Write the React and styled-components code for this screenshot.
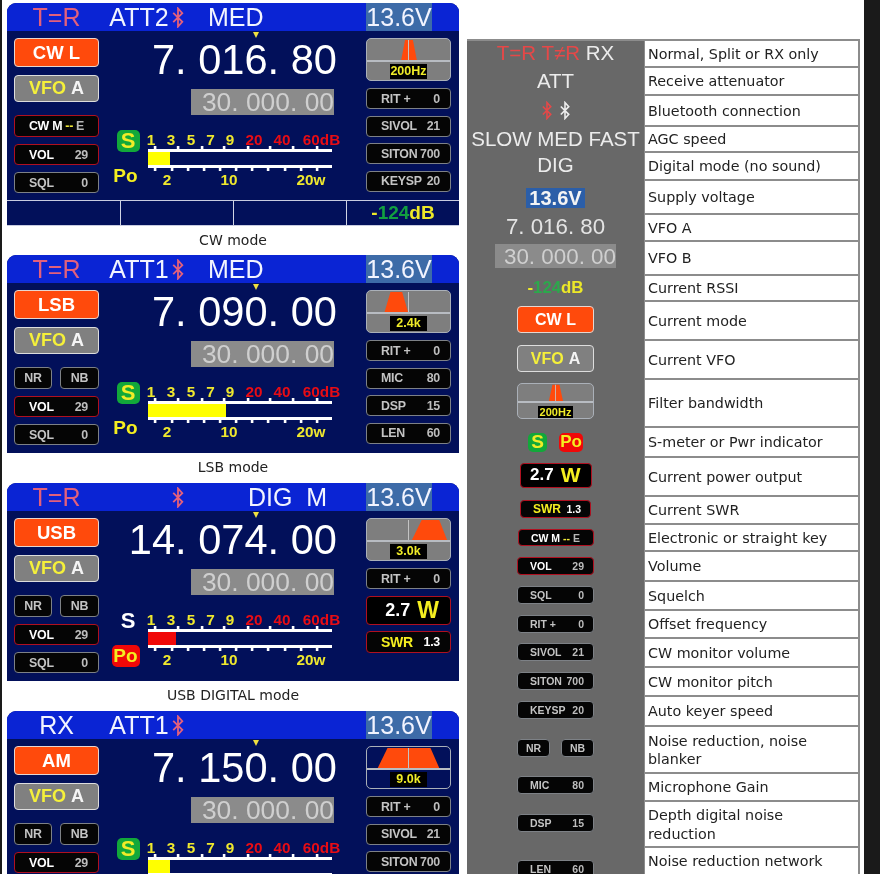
import React from "react";
import styled, { createGlobalStyle } from "styled-components";

const Global = createGlobalStyle`
  html, body { margin: 0; padding: 0; background: #1a1a1a; height: 874px; overflow: hidden; }
  #root { height: 874px; overflow: hidden; }
`;

const Sheet = styled.div`
  margin-left: 2px;
  width: 862px;
  height: 874px;
  overflow: hidden;
  background: #fff;
  display: flex;
  gap: 8px;
  padding-left: 5px;
  box-sizing: border-box;
  font-family: "Liberation Sans", Arial, sans-serif;
  filter: blur(0.35px);
`;
const LeftColumn = styled.div`
  width: 452px;
  flex: none;
  padding-top: 3px;
`;
const RightColumn = styled.div`
  width: 393px;
  flex: none;
  margin-top: 39px;
  border-top: 2px solid #8c8c8c;
  align-self: flex-start;
`;

/* ---------- radio panel ---------- */
const Panel = styled.section`
  position: relative;
  background: #02105a;
  border-radius: 9px 9px 0 0;
  overflow: hidden;
`;
const Header = styled.header`
  height: 28px;
  background: #0a24d4;
  display: flex;
  align-items: center;
  font-size: 25px;
  color: #f2f4ff;
`;
const LinkSlot = styled.span`
  width: 99px;
  text-align: center;
  flex: none;
  color: ${(p) => (p.$rx ? "#f2f4ff" : "#e2607c")};
`;
const AttSlot = styled.span`
  width: 66px;
  flex: none;
  text-align: center;
`;
const BtSlot = styled.span`
  width: 12px;
  flex: none;
  display: flex;
`;
const AgcSlot = styled.span`
  margin-left: ${(p) => p.$offset}px;
  white-space: pre;
`;
const Voltage = styled.span`
  margin-left: auto;
  margin-right: 27px;
  width: 66px;
  height: 28px;
  line-height: 29px;
  text-align: center;
  background: #3d6ba8;
`;
const Tuner = styled.i`
  position: absolute;
  left: 246px;
  top: 29px;
  width: 0;
  height: 0;
  border-left: 3.5px solid transparent;
  border-right: 3.5px solid transparent;
  border-top: 6px solid #f0e040;
`;
const Body = styled.div`
  display: grid;
  grid-template-columns: 85px 267px 85px;
  padding: 7px 8px 7px 7px;
  height: 156px;
`;
const Side = styled.div`
  display: flex;
  flex-direction: column;
`;
const Center = styled.div`
  display: flex;
  flex-direction: column;
  align-items: flex-end;
`;
const ModeButton = styled.div`
  box-sizing: border-box;
  height: ${(p) => (p.$small ? 27 : 29)}px;
  width: ${(p) => (p.$small ? 77 : 85)}px;
  border: 1.5px solid #e6d6d0;
  border-radius: 4px;
  background: #ff4a0c;
  color: #fff;
  font-weight: 700;
  font-size: ${(p) => (p.$small ? 16 : 18.5)}px;
  display: flex;
  align-items: center;
  justify-content: center;
`;
const VfoButton = styled.div`
  box-sizing: border-box;
  height: 27px;
  width: ${(p) => (p.$small ? 77 : 85)}px;
  margin-top: ${(p) => (p.$small ? 0 : 8)}px;
  border: 1.5px solid #ddd;
  border-radius: 4px;
  background: #808080;
  color: #f5f03a;
  font-weight: 700;
  font-size: ${(p) => (p.$small ? 16 : 18)}px;
  display: flex;
  align-items: center;
  justify-content: center;
  gap: 5px;
  & b { color: #f4f4f4; }
`;
const Controls = styled.div`
  display: flex;
  flex-direction: column;
  gap: ${(p) => p.$gap}px;
  margin-top: ${(p) => p.$top}px;
`;
const Readout = styled.div`
  box-sizing: border-box;
  height: ${(p) => p.$h}px;
  width: ${(p) => p.$w || 85}px;
  flex: none;
  white-space: nowrap;
  background: #050505;
  border: 1.5px solid ${(p) => (p.$tone === "red" ? "#b01020" : "#7d8186")};
  border-radius: 4px;
  color: ${(p) => (p.$tone === "red" ? "#fff" : "#c4c4c4")};
  font-weight: 700;
  letter-spacing: ${(p) => (p.$small ? 0 : -0.25)}px;
  font-size: ${(p) => (p.$small ? 10.5 : 12.4)}px;
  display: flex;
  align-items: center;
  justify-content: ${(p) => (p.$center ? "center" : "space-between")};
  padding: ${(p) => (p.$center ? "0" : p.$small ? "0 9px 0 12px" : "0 10px 0 14px")};
  & em { font-style: normal; color: #bdbdbd; }
`;
const KeyYellow = styled.span`
  color: #f0e838;
  margin: 0 3px;
`;
const KeyMuted = styled.span`
  color: #b8b8b8;
`;
const KeyRow = styled.div`
  display: flex;
  justify-content: space-between;
  width: ${(p) => p.$w}px;
`;
const PowerBox = styled(Readout)`
  background: #000;
  justify-content: flex-end;
  padding: 0 ${(p) => (p.$small ? 10 : 11)}px 0 0;
  color: #fff;
  letter-spacing: 0;
  font-size: ${(p) => (p.$small ? 17 : 18)}px;
  & b { color: #f4ee20; font-size: ${(p) => (p.$small ? 21 : 23)}px; margin-left: 7px; }
`;
const SwrBox = styled(Readout)`
  color: #fff;
  & b { color: #f4ee20; font-size: ${(p) => (p.$small ? 12 : 14)}px; }
`;

/* frequencies */
const FreqMain = styled.div`
  font-size: ${(p) => (p.$small ? 22.3 : 41.6)}px;
  line-height: ${(p) => (p.$small ? 26 : 42)}px;
  height: ${(p) => (p.$small ? 26 : 42)}px;
  color: ${(p) => (p.$small ? "#e4e4e4" : "#fff")};
  white-space: pre;
  margin: ${(p) => (p.$small ? 0 : "0.5px 29px 0 0")};
`;
const FreqSub = styled.div`
  box-sizing: border-box;
  background: #8b8b8b;
  color: #cfcfcf;
  text-align: right;
  white-space: pre;
  width: ${(p) => (p.$small ? 121 : 143)}px;
  height: ${(p) => (p.$small ? 24 : 26)}px;
  line-height: ${(p) => (p.$small ? 25 : 27)}px;
  font-size: ${(p) => (p.$small ? 22.4 : 26.4)}px;
  margin: ${(p) => (p.$small ? 0 : "8.5px 32px 0 0")};
`;

/* meter */
const MeterRow = styled.div`
  align-self: stretch;
  display: flex;
  margin-top: 15px;
  padding-left: 11px;
`;
const BadgeColumn = styled.div`
  width: 31px;
  flex: none;
  display: flex;
  flex-direction: column;
  gap: 13px;
  align-items: center;
`;
const Badge = styled.span`
  box-sizing: border-box;
  display: flex;
  align-items: center;
  justify-content: center;
  height: ${(p) => (p.$small ? 19 : 22)}px;
  border-radius: 5px;
  width: ${(p) => p.$w}px;
  margin-left: ${(p) => p.$shift || 0}px;
  background: ${(p) => p.$bg || "transparent"};
  color: ${(p) => p.$color};
  font-weight: 700;
  font-size: ${(p) => p.$size}px;
`;
const Meter = styled.div`
  flex: none;
  width: 207px;
  padding-top: 2px;
`;
const ScaleRow = styled.div`
  display: flex;
  font-weight: 700;
  font-size: 15.3px;
  line-height: ${(p) => p.$lh}px;
  height: ${(p) => p.$lh}px;
  margin-top: ${(p) => p.$top || 0}px;
`;
const ScaleLabel = styled.span`
  width: ${(p) => p.$w}px;
  flex: none;
  text-align: center;
  color: ${(p) => (p.$red ? "#e80c14" : "#efe82e")};
`;
const MeterSvg = styled.svg`
  display: block;
  width: 207px;
  height: 25px;
  margin-top: -1px;
`;

/* filter */
const Filter = styled.div`
  box-sizing: border-box;
  width: ${(p) => (p.$small ? 77 : 85)}px;
  height: ${(p) => (p.$small ? 36 : 43)}px;
  border: 1px solid #aab0b8;
  border-radius: 5px;
  background: ${(p) => (p.$navy ? "#02105a" : "#7e7e7e")};
  overflow: hidden;
  display: flex;
  flex-direction: column;
  align-items: center;
`;
const FilterSvg = styled.svg`
  display: block;
  width: 100%;
  height: ${(p) => (p.$small ? 17 : 21)}px;
  flex: none;
`;
const FilterLine = styled.div`
  width: 100%;
  height: 1.5px;
  flex: none;
  background: #b8bcc2;
`;
const FilterLabel = styled.span`
  margin-top: ${(p) => (p.$small ? 3 : 2.5)}px;
  width: ${(p) => (p.$small ? 35 : 37)}px;
  height: ${(p) => (p.$small ? 12 : 15)}px;
  line-height: ${(p) => (p.$small ? 12 : 15)}px;
  background: #000;
  color: #f0ec28;
  font-weight: 700;
  font-size: ${(p) => (p.$small ? 11 : 12.5)}px;
  text-align: center;
`;

/* footer */
const Footer = styled.footer`
  display: grid;
  grid-template-columns: repeat(4, 113px);
  height: 26px;
  box-sizing: border-box;
  border-top: 1.5px solid #c8cce0;
  border-bottom: 1.5px solid #c8cce0;
  margin-top: -1px;
`;
const FooterCell = styled.div`
  border-left: ${(p) => (p.$first ? "none" : "1.5px solid #d0d4e4")};
  display: flex;
  align-items: center;
  justify-content: center;
`;
const Rssi = styled.span`
  font-weight: 700;
  font-size: ${(p) => (p.$small ? 16.8 : 19)}px;
  color: #ece828;
  & i { font-style: normal; color: ${(p) => (p.$small ? "#2ca84c" : "#12a040")}; }
`;
const Caption = styled.div`
  height: ${(p) => p.$h}px;
  display: flex;
  align-items: center;
  justify-content: center;
  font-family: "DejaVu Sans", sans-serif;
  font-size: 14px;
  color: #222;
  padding-bottom: 2px;
  box-sizing: border-box;
`;

/* legend table */
const LegendRow = styled.div`
  display: grid;
  grid-template-columns: 177px 216px;
  grid-template-rows: ${(p) => p.$h}px;
`;
const Sample = styled.div`
  background: #686868;
  color: #ececec;
  display: flex;
  align-items: center;
  justify-content: center;
  font-size: 20.5px;
  line-height: 20px;
  gap: ${(p) => p.$gap || 0}px;
  white-space: nowrap;
  box-sizing: border-box;
  min-height: 0;
  padding-bottom: ${(p) => p.$lift || 0}px;
`;
const Meaning = styled.div`
  box-sizing: border-box;
  background: #fff;
  min-height: 0;
  border-left: 1px solid #8c8c8c;
  border-right: 2px solid #8c8c8c;
  border-bottom: 2px solid #8c8c8c;
  padding: ${(p) => (p.$top ? 4 : 1)}px 4px 0 3px;
  display: flex;
  align-items: ${(p) => (p.$top ? "flex-start" : "center")};
  font-family: "DejaVu Sans", sans-serif;
  font-size: 14.3px;
  line-height: 18.5px;
  color: #222;
`;
const Red = styled.span`
  color: #e54848;
`;
const SupplyTag = styled.span`
  background: #2b5ea8;
  color: #f4f4f4;
  font-weight: 700;
  width: 59px;
  height: 20px;
  line-height: 21px;
  text-align: center;
  font-size: 20px;
`;

const BtIcon = ({ color, w = 12, h = 21, sw = 1.9 }) => (
  <svg width={w} height={h} viewBox="0 0 12 22" fill="none" stroke={color} strokeWidth={sw}>
    <path d="M1 6.2 10.5 15.6 6 20.5V1.5l4.5 4.9L1 15.8" />
  </svg>
);

const topTicks = [14, 37, 61, 83, 107, 129, 152, 176];
const botTicks = [14, 31, 47, 63, 79, 95, 111, 127, 144, 160, 176];

const MeterBars = ({ fill, color }) => (
  <MeterSvg viewBox="0 0 207 25">
    {topTicks.map((x) => <rect key={x} x={x - 1.2} y="0" width="2.6" height="3" fill="#fff" />)}
    {botTicks.map((x) => <rect key={x} x={x - 1.2} y="22" width="2.6" height="3" fill="#fff" />)}
    <rect x="7" y="3" width="184" height="3" fill="#fff" />
    <rect x="7" y="19" width="184" height="3" fill="#fff" />
    <rect x="7" y="6" width={fill} height="13" fill={color} />
  </MeterSvg>
);

const FilterShape = ({ shape, small, navy, label }) => (
  <Filter $small={small} $navy={navy}>
    <FilterSvg $small={small} viewBox="0 0 85 21" preserveAspectRatio="none">
      <polygon points={shape} fill="#ff4a0c" />
      <line x1="42.5" y1="1" x2="42.5" y2="21" stroke="#c4c4c4" strokeWidth="1" />
    </FilterSvg>
    <FilterLine />
    <FilterLabel $small={small}>{label}</FilterLabel>
  </Filter>
);

const RedBox = (p) => <Readout $h={21} $tone="red" {...p} />;
const GrayBox = (p) => <Readout $h={21} $tone="gray" {...p} />;
const Pair = ({ a, b }) => (<><span>{a}</span><em>{b}</em></>);

const RadioPanel = ({ d }) => (
  <Panel>
    <Header>
      <LinkSlot $rx={d.link === "RX"}>{d.link}</LinkSlot>
      <AttSlot>{d.att}</AttSlot>
      <BtSlot><BtIcon color="#e2607c" /></BtSlot>
      <AgcSlot $offset={d.agc.length > 3 ? 64 : 24}>{d.agc}</AgcSlot>
      <Voltage>13.6V</Voltage>
    </Header>
    <Tuner />
    <Body>
      <Side>
        <ModeButton>{d.mode}</ModeButton>
        <VfoButton>VFO <b>A</b></VfoButton>
        <Controls $top={13} $gap={7}>
          {d.keys ? (
            <Readout $h={22} $tone="red" $center>
              CW M<KeyYellow>--</KeyYellow><KeyMuted>E</KeyMuted>
            </Readout>
          ) : (
            <KeyRow $w={85}>
              <Readout $h={22} $w={38} $tone="gray" $center>NR</Readout>
              <Readout $h={22} $w={39} $tone="gray" $center>NB</Readout>
            </KeyRow>
          )}
          <RedBox><Pair a="VOL" b="29" /></RedBox>
          <GrayBox><Pair a="SQL" b="0" /></GrayBox>
        </Controls>
      </Side>
      <Center>
        <FreqMain>{d.freq}</FreqMain>
        <FreqSub>30. 000. 00</FreqSub>
        <MeterRow>
          <BadgeColumn>
            {d.tx ? (
              <Badge $w={23} $shift={5} $color="#fff" $size={22}>S</Badge>
            ) : (
              <Badge $w={23} $shift={5} $bg="#12a83a" $color="#f0ec28" $size={22}>S</Badge>
            )}
            {d.tx ? (
              <Badge $w={28} $bg="#f00808" $color="#f4ee20" $size={19}>Po</Badge>
            ) : (
              <Badge $w={28} $color="#f4ee20" $size={19}>Po</Badge>
            )}
          </BadgeColumn>
          <Meter>
            <ScaleRow $lh={15}>
              {[["1", 20], ["3", 20], ["5", 20], ["7", 19], ["9", 20]].map(([t, w]) => (
                <ScaleLabel key={t} $w={w}>{t}</ScaleLabel>
              ))}
              {[["20", 28], ["40", 28], ["60dB", 51]].map(([t, w]) => (
                <ScaleLabel key={t} $w={w} $red>{t}</ScaleLabel>
              ))}
            </ScaleRow>
            <MeterBars fill={d.fill} color={d.tx ? "#f00808" : "#ffff00"} />
            <ScaleRow $lh={16} $top={1}>
              <ScaleLabel $w={52}>2</ScaleLabel>
              <ScaleLabel $w={72}>10</ScaleLabel>
              <ScaleLabel $w={92}>20w</ScaleLabel>
            </ScaleRow>
          </Meter>
        </MeterRow>
      </Center>
      <Side>
        <FilterShape shape={d.shape} label={d.bw} navy={d.navy} />
        <Controls $top={7} $gap={6.5}>
          <GrayBox><Pair a="RIT +" b="0" /></GrayBox>
          {d.tx ? (
            <>
              <PowerBox $h={29} $tone="red">2.7<b>W</b></PowerBox>
              <SwrBox $h={22} $tone="red"><b>SWR</b><span>1.3</span></SwrBox>
            </>
          ) : (
            d.right.map(([a, b]) => <GrayBox key={a}><Pair a={a} b={b} /></GrayBox>)
          )}
        </Controls>
      </Side>
    </Body>
    {d.footer && (
      <Footer>
        <FooterCell $first />
        <FooterCell />
        <FooterCell />
        <FooterCell><Rssi>-<i>124</i>dB</Rssi></FooterCell>
      </Footer>
    )}
  </Panel>
);

const panels = [
  { link: "T=R", att: "ATT2", agc: "MED", mode: "CW L", keys: true, freq: "7. 016. 80", fill: 22,
    shape: "35,21 51,21 47,1 39,1", bw: "200Hz", footer: true,
    right: [["SIVOL", "21"], ["SITON", "700"], ["KEYSP", "20"]], caption: "CW mode", capH: 29 },
  { link: "T=R", att: "ATT1", agc: "MED", mode: "LSB", freq: "7. 090. 00", fill: 78,
    shape: "18,21 42,21 36,1 24,1", bw: "2.4k",
    right: [["MIC", "80"], ["DSP", "15"], ["LEN", "60"]], caption: "LSB mode", capH: 30 },
  { link: "T=R", att: "", agc: "DIG  M", mode: "USB", freq: "14. 074. 00", fill: 28, tx: true,
    shape: "46,21 82,21 74,1 56,1", bw: "3.0k", caption: "USB DIGITAL mode", capH: 30 },
  { link: "RX", att: "ATT1", agc: "", mode: "AM", freq: "7. 150. 00", fill: 22, navy: true,
    shape: "11,21 74,21 65,1 21,1", bw: "9.0k",
    right: [["SIVOL", "21"], ["SITON", "700"], ["KEYSP", "20"]] },
];

const S = (a, b, red) => (
  <Readout $small $w={77} $h={18} $tone={red ? "red" : "gray"}><Pair a={a} b={b} /></Readout>
);

/* height, sample, meaning, lift, gap */
const legend = [
  [27, <><Red>T=R T≠R&nbsp;</Red>RX</>, "Normal, Split or RX only", 3],
  [28, "ATT", "Receive attenuator", 2],
  [31, <><BtIcon color="#e54848" w={10} h={19} /><BtIcon color="#eee" w={10} h={19} /></>, "Bluetooth connection", 2, 8],
  [26, "SLOW MED FAST", "AGC speed", 3],
  [28, "DIG", "Digital mode (no sound)", 4],
  [34, <SupplyTag>13.6V</SupplyTag>, "Supply voltage", 0],
  [27, <FreqMain $small>7. 016. 80</FreqMain>, "VFO A", 3],
  [34, <FreqSub $small>30. 000. 00</FreqSub>, "VFO B", 6],
  [26, <Rssi $small>-<i>124</i>dB</Rssi>, "Current RSSI", 2],
  [39, <ModeButton $small>CW L</ModeButton>, "Current mode", 4],
  [39, <VfoButton $small>VFO <b>A</b></VfoButton>, "Current VFO", 4],
  [48, <FilterShape small shape="35,21 51,21 47,1 39,1" label="200Hz" />, "Filter bandwidth", 6],
  [30, <>
    <Badge $small $w={19} $bg="#12a83a" $color="#f0ec28" $size={19}>S</Badge>
    <Badge $small $w={24} $bg="#f00808" $color="#f4ee20" $size={17}>Po</Badge>
  </>, "S-meter or Pwr indicator", 2, 12],
  [39, <PowerBox $small $w={72} $h={25} $tone="red">2.7<b>W</b></PowerBox>, "Current power output", 5],
  [28, <SwrBox $small $w={71} $h={18} $tone="red"><b>SWR</b><span>1.3</span></SwrBox>, "Current SWR", 5],
  [27, <Readout $small $w={76} $h={17} $tone="red" $center>
    CW M<KeyYellow>--</KeyYellow><KeyMuted>E</KeyMuted>
  </Readout>, "Electronic or straight key", 2],
  [30, S("VOL", "29", true), "Volume", 3],
  [29, S("SQL", "0"), "Squelch", 3],
  [28, S("RIT +", "0"), "Offset frequency", 2],
  [29, S("SIVOL", "21"), "CW monitor volume", 3],
  [29, S("SITON", "700"), "CW monitor pitch", 3],
  [30, S("KEYSP", "20"), "Auto keyer speed", 4],
  [47, <KeyRow $w={77}>
    <Readout $small $w={33} $h={18} $tone="gray" $center>NR</Readout>
    <Readout $small $w={33} $h={18} $tone="gray" $center>NB</Readout>
  </KeyRow>, "Noise reduction, noise blanker", 5],
  [28, S("MIC", "80"), "Microphone Gain", 6],
  [46, S("DSP", "15"), "Depth digital noise reduction", 4],
  [48, S("LEN", "60"), "Noise reduction network", 6, 0, true],
];

export default function App() {
  return (
    <>
      <Global />
      <Sheet>
        <LeftColumn>
          {panels.map((d, i) => (
            <React.Fragment key={i}>
              <RadioPanel d={d} />
              {d.caption && <Caption $h={d.capH}>{d.caption}</Caption>}
            </React.Fragment>
          ))}
        </LeftColumn>
        <RightColumn>
          {legend.map(([h, sample, text, lift, gap, top], i) => (
            <LegendRow key={i} $h={h}>
              <Sample $gap={gap} $lift={lift}>{sample}</Sample>
              <Meaning $top={top}>{text}</Meaning>
            </LegendRow>
          ))}
        </RightColumn>
      </Sheet>
    </>
  );
}
